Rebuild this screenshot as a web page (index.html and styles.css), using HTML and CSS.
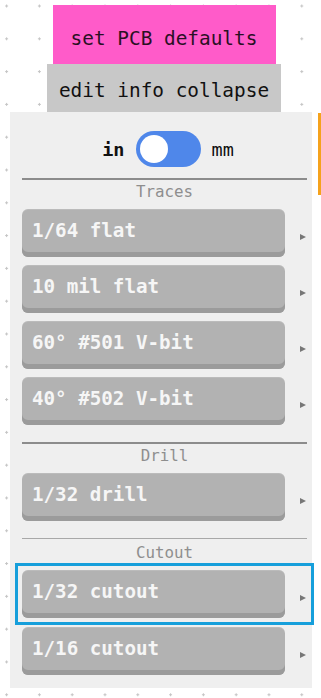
FILE: index.html
```html
<!DOCTYPE html>
<html>
<head>
<meta charset="utf-8">
<link rel="stylesheet" href="styles.css">
</head>
<body>
<div class="top">
  <div class="btn-pink">set PCB defaults</div>
  <div class="btn-gray">edit info collapse</div>
</div>
<div class="panel">
  <div class="units">
    <span class="u-in">in</span>
    <span class="switch"><span class="knob"></span></span>
    <span class="u-mm">mm</span>
  </div>
  <div class="rule thick first"></div>
  <div class="label">Traces</div>
  <div class="list">
    <div class="row"><div class="tool">1/64 flat</div><span class="arrow"></span></div>
    <div class="row"><div class="tool">10 mil flat</div><span class="arrow"></span></div>
    <div class="row"><div class="tool">60° #501 V-bit</div><span class="arrow"></span></div>
    <div class="row"><div class="tool">40° #502 V-bit</div><span class="arrow"></span></div>
  </div>
  <div class="rule thick sep"></div>
  <div class="label">Drill</div>
  <div class="list">
    <div class="row"><div class="tool">1/32 drill</div><span class="arrow"></span></div>
  </div>
  <div class="rule thin sep"></div>
  <div class="label low">Cutout</div>
  <div class="list wide">
    <div class="row selected"><div class="tool">1/32 cutout</div><span class="arrow"></span></div>
    <div class="row"><div class="tool">1/16 cutout</div><span class="arrow"></span></div>
  </div>
  <div class="scrollthumb"></div>
</div>
</body>
</html>
```
FILE: styles.css
```css
html, body {
  margin: 0;
  padding: 0;
}
body {
  width: 321px;
  height: 698px;
  overflow: hidden;
  background-color: #ffffff;
  background-image: radial-gradient(circle, #c4c4c4 0, #c4c4c4 1px, rgba(255,255,255,0) 1.4px);
  background-size: 32.8px 32.8px;
  background-position: -9.8px -10.4px;
  font-family: "DejaVu Sans Mono", "Liberation Mono", monospace;
}
.top {
  display: flex;
  flex-direction: column;
  align-items: center;
  padding: 5px 0 0 7px;
}
.btn-pink {
  width: 223px;
  height: 59px;
  background: #ff5bc9;
  color: #2a1024;
  font-size: 19.4px;
  display: flex;
  align-items: center;
  justify-content: center;
  padding-top: 7px;
  box-sizing: border-box;
}
.btn-gray {
  width: 234px;
  height: 48px;
  background: #c8c8c8;
  color: #111;
  font-size: 19.4px;
  display: flex;
  align-items: center;
  justify-content: center;
  padding-top: 4px;
  box-sizing: border-box;
}
.panel {
  position: relative;
  margin-left: 10px;
  width: 302px;
  height: 576px;
  background: #efefef;
  box-sizing: border-box;
  padding: 19px 5px 0 12px;
}
.units {
  display: flex;
  align-items: center;
  justify-content: center;
  gap: 11px;
  padding-left: 7px;
  height: 36px;
  font-size: 18.5px;
  color: #111;
}
.u-in { font-weight: bold; }
.switch {
  position: relative;
  width: 65px;
  height: 36px;
  border-radius: 18px;
  background: #4f87ea;
}
.knob {
  position: absolute;
  left: 4px;
  top: 4px;
  width: 28px;
  height: 28px;
  border-radius: 50%;
  background: #fff;
}
.rule { height: 2px; background: #8c8c8c; }
.rule.first { margin-top: 11px; }
.rule.thin { height: 1px; background: #a8a8a8; }
.rule.sep { margin-top: 17px; }
.label {
  height: 24px;
  line-height: 24px;
  text-align: center;
  font-size: 15.8px;
  color: #8e8e8e;
}
.label.low { margin-top: 2px; }
.list {
  display: flex;
  flex-direction: column;
  gap: 8px;
  margin-top: 5px;
}
.list.wide { gap: 9px; }
.row {
  display: flex;
  align-items: center;
  height: 48px;
}
.row.selected {
  outline: 3px solid #169fdb;
  outline-offset: 4px;
}
.tool {
  width: 263px;
  height: 48px;
  box-sizing: border-box;
  padding: 0 0 6px 10px;
  display: flex;
  align-items: center;
  background: #b2b2b2;
  border-radius: 6px;
  box-shadow: inset 0 -5px 0 #9b9b9b, inset 0 1px 0 rgba(255,255,255,0.12);
  color: #f6f6f6;
  font-size: 19.2px;
  font-weight: 600;
}
.arrow {
  width: 0;
  height: 0;
  margin: 8px 0 0 15px;
  border-left: 6px solid #777;
  border-top: 3px solid transparent;
  border-bottom: 3px solid transparent;
}
.scrollthumb {
  position: absolute;
  right: -9px;
  top: 1px;
  width: 3px;
  height: 82px;
  background: #f5a21c;
}
```
